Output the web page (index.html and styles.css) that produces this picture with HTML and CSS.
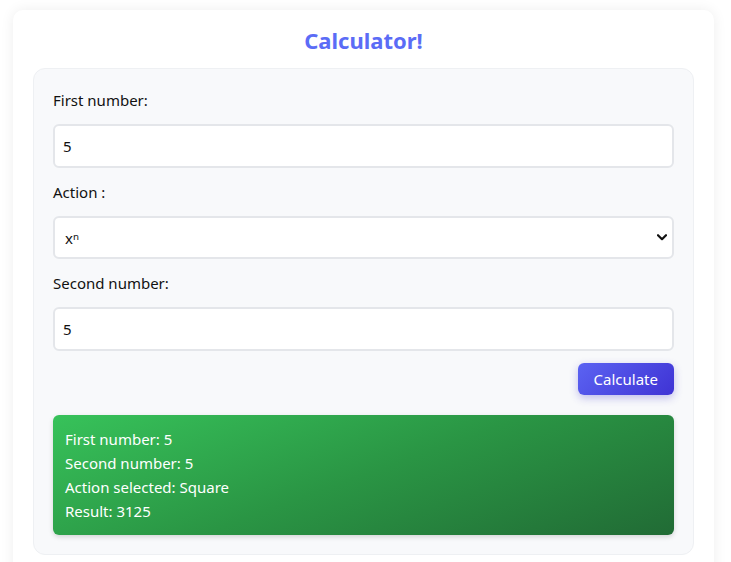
FILE: index.html
```html
<!DOCTYPE html>
<html lang="en">
<head>
<meta charset="utf-8">
<title>Calculator</title>
<link rel="stylesheet" href="styles.css">
</head>
<body>
<div class="card">
  <h1 class="title">Calculator!</h1>
  <div class="panel">
    <label class="label" for="first">First number:</label>
    <input class="field" id="first" type="text" value="5">
    <label class="label" for="action">Action :</label>
    <div class="select-wrap">
      <select class="field select" id="action">
        <option>xⁿ</option>
      </select>
      <svg class="chevron" width="10" height="7" viewBox="0 0 10 7"><path d="M1 1.2 L5 5.2 L9 1.2" fill="none" stroke="#111" stroke-width="2.2" stroke-linecap="round" stroke-linejoin="round"/></svg>
    </div>
    <label class="label" for="second">Second number:</label>
    <input class="field" id="second" type="text" value="5">
    <div class="actions">
      <button class="btn" type="button">Calculate</button>
    </div>
    <div class="result">
      <div>First number: 5</div>
      <div>Second number: 5</div>
      <div>Action selected: Square</div>
      <div>Result: 3125</div>
    </div>
  </div>
</div>
</body>
</html>
```
FILE: styles.css
```css
* { box-sizing: border-box; }
html, body { height: 100%; }
body {
  margin: 0;
  padding: 10px 17px 0 13px;
  background: #ffffff;
  font-family: "Noto Sans", "Open Sans", sans-serif;
  font-size: 15px;
  color: #111;
  overflow: hidden;
}
.card {
  background: #fff;
  border-radius: 10px;
  box-shadow: 0 0 14px rgba(0, 0, 0, 0.07);
  padding: 15px 20px 20px;
  min-height: 600px;
}
.title {
  margin: 0 0 13px;
  text-align: center;
  font-size: 22px;
  line-height: 30px;
  font-weight: 700;
  color: #5b6cf6;
}
.panel {
  background: #f8f9fb;
  border: 1px solid #eef0f3;
  border-radius: 12px;
  padding: 19px 19px 19px;
  display: flex;
  flex-direction: column;
}
.label {
  display: block;
  line-height: 24px;
  margin-bottom: 12px;
  color: #111;
}
.field {
  display: block;
  width: 100%;
  height: 44px;
  border: 2px solid #e4e6ea;
  border-radius: 6px;
  background: #fff;
  padding: 0 8px;
  font-family: inherit;
  font-size: 15px;
  color: #111;
  margin-bottom: 12px;
  outline: none;
}
.select-wrap {
  position: relative;
  margin-bottom: 12px;
}
.select {
  appearance: none;
  -webkit-appearance: none;
  height: 43px;
  margin-bottom: 0;
  padding-left: 10px;
}
.chevron {
  position: absolute;
  right: 7px;
  top: 18px;
}
.actions {
  display: flex;
  justify-content: flex-end;
  margin-bottom: 20px;
}
.btn {
  height: 32px;
  padding: 0 16px;
  border: none;
  border-radius: 6px;
  background: linear-gradient(135deg, #5b63f2 0%, #3f33d4 100%);
  color: #fff;
  font-family: inherit;
  font-size: 15px;
  box-shadow: 0 3px 8px rgba(60, 50, 200, 0.3);
}
.result {
  background: linear-gradient(160deg, #37c25a 0%, #2a9544 50%, #216b35 100%);
  border-radius: 6px;
  padding: 12px;
  color: #fff;
  line-height: 24px;
  box-shadow: 0 2px 5px rgba(0, 0, 0, 0.15);
}
```
